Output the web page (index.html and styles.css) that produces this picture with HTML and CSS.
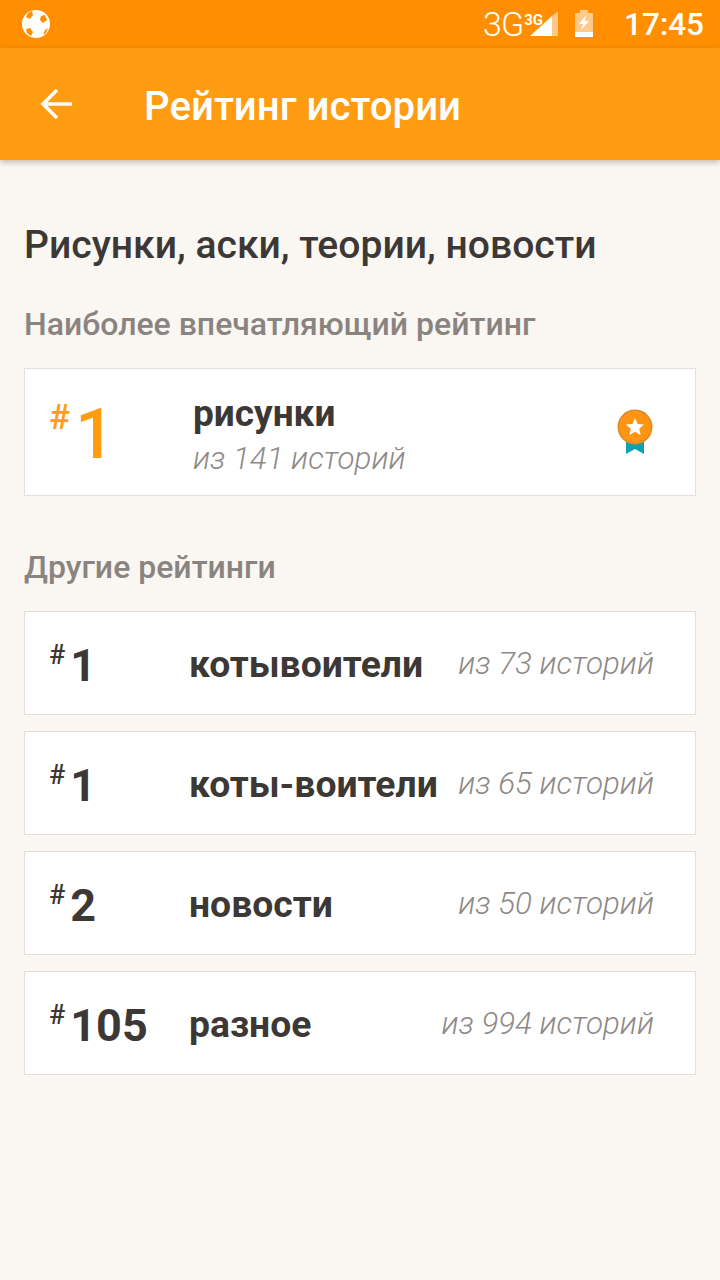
FILE: index.html
```html
<!DOCTYPE html>
<html lang="ru">
<head>
  <meta charset="UTF-8">
  <title>Рейтинг истории</title>
  <link rel="stylesheet" href="styles.css">
</head>
<body>
  <div class="status-bar">
    <svg class="ball" width="30" height="30" viewBox="0 0 30 30">
      <circle cx="15" cy="15" r="14" fill="#fff"/>
      <polygon points="7,4 11,2 12,6 9,10 5,8" fill="#ff8f00"/>
      <polygon points="20,7 24,6 26,11 22,14 19,11" fill="#ff8f00"/>
      <polygon points="5,20 9,19 12,23 10,27 6,24" fill="#ff8f00"/>
      <polygon points="24,21 27,19 25,24 22,26" fill="#ff8f00"/>
    </svg>
    <div class="status-right">
      <span class="net">3G</span>
      <span class="net-small">3G</span>
      <svg class="signal" width="28" height="28" viewBox="0 0 28 28">
        <polygon points="0,26 22,26 22,6" fill="#fff"/>
        <polygon points="22,26 28,26 28,1 22,6" fill="#ffc98a"/>
      </svg>
      <svg class="battery" width="20" height="28" viewBox="0 0 20 28">
        <rect x="6" y="0" width="8" height="4" fill="#ffc98a"/>
        <rect x="1" y="3" width="18" height="19" fill="#ffc98a"/>
        <rect x="1" y="22" width="18" height="5" fill="#fff"/>
        <polygon points="12,5 5,14 9,14 7,20 15,11 11,11" fill="#fff"/>
      </svg>
      <span class="clock">17:45</span>
    </div>
  </div>
  <div class="app-bar">
    <svg class="back" width="36" height="36" viewBox="0 0 36 36">
      <path d="M33 18H5M18 4 4 18l14 14" fill="none" stroke="#fff" stroke-width="3.500"/>
    </svg>
    <h1 class="app-title">Рейтинг истории</h1>
  </div>

  <div class="content">
    <h2 class="page-title">Рисунки, аски, теории, новости</h2>

    <h3 class="section-title">Наиболее впечатляющий рейтинг</h3>
    <div class="card card-top">
      <div class="rank rank-top"><span class="hash">#</span>1</div>
      <div class="top-text">
        <div class="top-name">рисунки</div>
        <div class="count">из 141 историй</div>
      </div>
      <svg class="medal" width="36" height="46" viewBox="0 0 36 46">
        <polygon points="9,28 27,28 27,45 18,40 9,45" fill="#0ea0b2"/>
        <circle cx="18" cy="18" r="17.500" fill="#d98a2b"/>
        <circle cx="18" cy="18" r="16" fill="#ff9512"/>
        <polygon points="18,9 20.600,15 27,15.600 22.200,19.800 23.600,26 18,22.800 12.400,26 13.800,19.800 9,15.600 15.400,15" fill="#fff"/>
      </svg>
    </div>

    <h3 class="section-title section-other">Другие рейтинги</h3>
    <div class="list">
      <div class="card row">
        <div class="rank"><span class="hash">#</span>1</div>
        <div class="name">котывоители</div>
        <div class="count">из 73 историй</div>
      </div>
      <div class="card row">
        <div class="rank"><span class="hash">#</span>1</div>
        <div class="name">коты-воители</div>
        <div class="count">из 65 историй</div>
      </div>
      <div class="card row">
        <div class="rank"><span class="hash">#</span>2</div>
        <div class="name">новости</div>
        <div class="count">из 50 историй</div>
      </div>
      <div class="card row">
        <div class="rank"><span class="hash">#</span>105</div>
        <div class="name">разное</div>
        <div class="count">из 994 историй</div>
      </div>
    </div>
  </div>
</body>
</html>
```

FILE: styles.css
```css
* {
  box-sizing: border-box;
}
body {
  margin: 0;
  min-height: 1280px;
  background: #faf6f2;
  font-family: Roboto, "Noto Sans", sans-serif;
  color: #3c3836;
  overflow: hidden;
}
.status-bar {
  height: 48px;
  background: #ff8f00;
  display: flex;
  align-items: center;
  justify-content: space-between;
  padding: 0 16px 0 21px;
  color: #fff;
}
.status-right {
  display: flex;
  align-items: center;
}
.net {
  font-size: 34px;
  font-weight: 300;
  letter-spacing: -1px;
}
.net-small {
  font-size: 15px;
  font-weight: 700;
  line-height: 16px;
  align-self: flex-start;
  margin: 8px 0 0 1px;
}
.signal {
  margin-left: -13px;
}
.battery {
  margin-left: 16px;
}
.clock {
  font-size: 31.500px;
  font-weight: 500;
  margin-left: 30px;
}
.app-bar {
  height: 112px;
  background: #ff9c12;
  display: flex;
  align-items: center;
  padding-left: 39px;
  box-shadow: 0 2px 6px rgba(90, 60, 20, 0.35);
}
.back {
  margin-top: -1px;
}
.app-title {
  margin: 4px 0 0 69px;
  color: #fff;
  font-size: 40.200px;
  font-weight: 500;
}
.content {
  padding: 63px 24px 0;
}
.page-title {
  margin: 0;
  font-size: 39.100px;
  line-height: 44px;
  font-weight: 500;
  color: #3c3836;
}
.section-title {
  margin: 39px 0 0;
  font-size: 32px;
  line-height: 36px;
  font-weight: 500;
  color: #8a8480;
}
.section-other {
  margin-top: 53px;
}
.card {
  background: #fff;
  border: 1px solid #e6dfd9;
  display: flex;
  align-items: center;
}
.card-top {
  height: 128px;
  margin-top: 26px;
  padding: 0 42px 0 24px;
}
.rank {
  width: 140px;
  font-size: 45px;
  line-height: 54px;
  font-weight: 700;
  color: #3c3836;
  flex-shrink: 0;
  display: flex;
  align-items: flex-start;
  padding-top: 5px;
}
.hash {
  font-size: 27px;
  line-height: 30px;
  font-weight: 500;
  margin: 1px 5px 0 0;
}
.rank-top {
  width: 144px;
  font-size: 70px;
  line-height: 84px;
  font-weight: 500;
  color: #ff9c12;
  padding-top: 4px;
}
.rank-top .hash {
  font-size: 35px;
  line-height: 40px;
  margin: 6px 5px 0 0;
}
.top-text {
  flex: 1;
  padding-top: 8px;
}
.top-name {
  font-size: 37px;
  line-height: 44px;
  font-weight: 700;
}
.count {
  font-size: 31.300px;
  line-height: 44px;
  font-style: italic;
  font-weight: 300;
  color: #8e8a88;
  padding-top: 1px;
}
.list {
  display: flex;
  flex-direction: column;
  gap: 16px;
  margin-top: 26px;
}
.row {
  height: 104px;
  padding: 0 41px 0 24px;
}
.name {
  flex: 1;
  font-size: 37.300px;
  font-weight: 700;
  white-space: nowrap;
  padding-top: 2px;
}
```
